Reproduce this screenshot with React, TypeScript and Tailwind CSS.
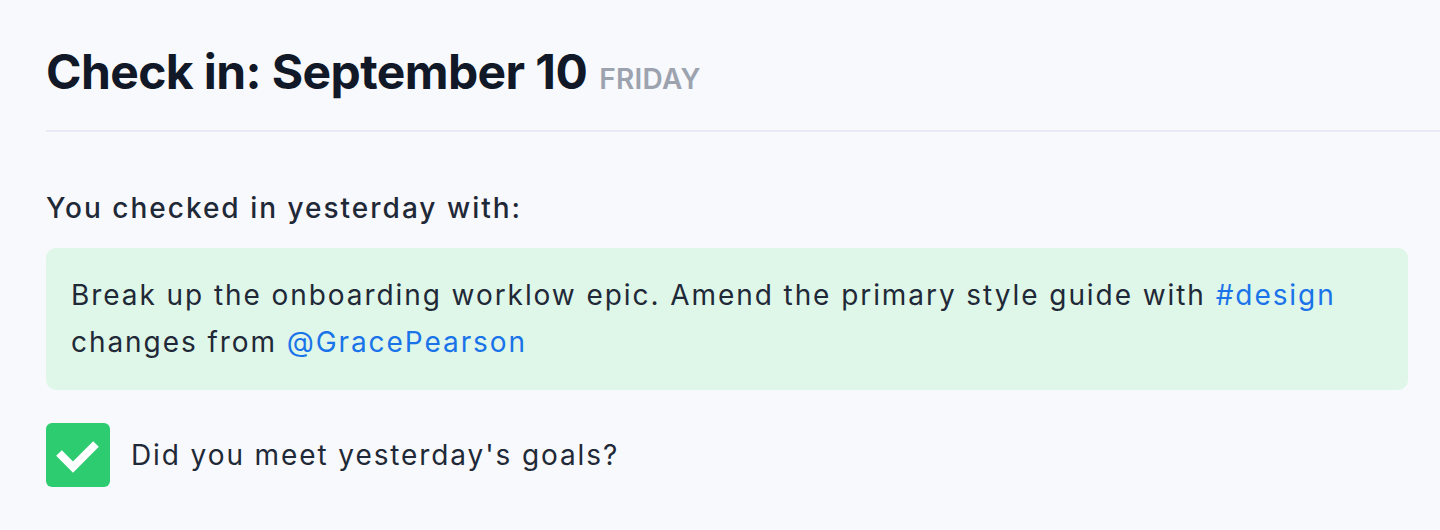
import React from "react";

export default function App() {
  return (
    <div className="w-[1440px] h-[530px] bg-[#f8f9fc] overflow-hidden" style={{ fontFamily: "Inter, 'Noto Sans', sans-serif" }}>
      <div className="pl-[46px]">
        <div className="flex items-baseline gap-[12px] pt-[44px] pb-[30px] border-b-2 border-[#e8ebf5]">
          <h1 className="text-[48px] leading-[56px] font-bold text-[#111827] tracking-[-0.6px]">Check in: September 10</h1>
          <span className="text-[28px] font-semibold text-[#9ca3af] tracking-[0.3px]">FRIDAY</span>
        </div>
        <div className="pr-[32px] pt-[56px]">
          <p className="text-[28px] leading-[40px] font-medium text-[#1f2937] tracking-[2px]">You checked in yesterday with:</p>
          <div className="mt-[20px] rounded-[10px] bg-[#dff7e8] px-[25px] py-[24px] text-[28px] leading-[47px] text-[#1f2937] tracking-[1.93px]">
            Break up the onboarding worklow epic. Amend the primary style guide with{" "}
            <span className="text-[#1a73e8]">#design</span>
            <br />
            changes from <span className="text-[#1a73e8]">@GracePearson</span>
          </div>
          <div className="mt-[33px] flex items-center gap-[21px]">
            <div className="w-[64px] h-[64px] rounded-[6px] bg-[#2ecc71]">
              <svg width="64" height="64" viewBox="0 0 64 64" fill="none">
                <path d="M13 30L27 44L50 21" stroke="white" strokeWidth="8" strokeLinecap="butt" strokeLinejoin="miter" />
              </svg>
            </div>
            <span className="text-[28px] text-[#1f2937] tracking-[1.9px]">Did you meet yesterday's goals?</span>
          </div>
        </div>
      </div>
    </div>
  );
}
